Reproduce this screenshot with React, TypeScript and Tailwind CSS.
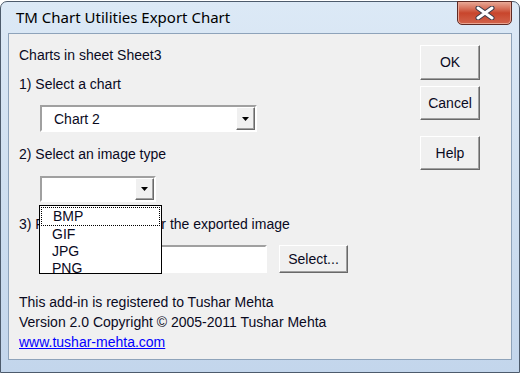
import React from "react";

const sunken =
  "border-2 border-t-[#a0a0a0] border-l-[#a0a0a0] border-b-white border-r-white bg-white";
const raised =
  "border border-t-white border-l-white border-b-[#696969] border-r-[#696969] shadow-[inset_-1px_-1px_0_#a0a0a0] bg-[#f0f0f0]";

function DropButton() {
  return (
    <div className={`flex items-center justify-center w-[19px] h-full ${raised}`}>
      <svg width="7" height="4" viewBox="0 0 7 4">
        <path d="M0 0H7L3.5 4Z" fill="#000" />
      </svg>
    </div>
  );
}

function Button({ label, className }: { label: string; className: string }) {
  return (
    <button className={`flex items-center justify-center text-[14px] text-[#0a0a1e] ${raised} ${className}`}>
      {label}
    </button>
  );
}

export default function App() {
  return (
    <div
      className="w-[520px] h-[375px] bg-white pt-px"
      style={{ fontFamily: '"Liberation Sans", Arial, sans-serif' }}
    >
      <div className="relative w-[520px] h-[372px] rounded-t-[7px] border border-[#4d5b6c] bg-gradient-to-b from-[#dce9f6] via-[#cfdff0] to-[#c3d6ec] flex flex-col px-[7px]">
        {/* title bar */}
        <div className="h-[31px] flex items-center pl-2">
          <span
            className="text-[15px] text-black"
            style={{ fontFamily: '"Noto Sans", "Open Sans", sans-serif' }}
          >
            TM Chart Utilities Export Chart
          </span>
        </div>
        <div className="absolute right-[7px] -top-px w-[55px] h-[24px] rounded-b-[5px] border border-[#5e2a24] bg-gradient-to-b from-[#e6a896] via-[#c8452c] to-[#d2634b] flex items-center justify-center shadow-[inset_0_0_0_1px_#e9a592]">
          <svg width="22" height="14" viewBox="0 0 22 14">
            <path d="M4 2L18 12M18 2L4 12" stroke="#3b3b4a" strokeWidth="5" strokeLinecap="round" />
            <path d="M4 2L18 12M18 2L4 12" stroke="#fff" strokeWidth="3" strokeLinecap="round" />
          </svg>
        </div>

        {/* client area */}
        <div className="h-[327px] border border-[#8ea3ba] bg-[#f0f0f0] flex text-[14px] text-[#0a0a1e]">
          <div className="flex-1 flex flex-col pl-[10px] pt-[11px] leading-[20px]">
            <div>Charts in sheet Sheet3</div>
            <div className="mt-[9px]">1) Select a chart</div>
            <div className={`mt-[11px] ml-[21px] w-[217px] h-[27px] flex ${sunken}`}>
              <div className="flex-1 flex items-center pl-[12px]">Chart 2</div>
              <DropButton />
            </div>
            <div className="mt-[12px]">2) Select an image type</div>
            <div className="relative mt-[12px] ml-[21px] w-[116px] h-[26px]">
              <div className={`w-full h-full flex ${sunken}`}>
                <div className="flex-1" />
                <DropButton />
              </div>
              <div className="absolute z-10 left-[-1px] top-[29px] w-[123px] h-[69px] border border-black bg-white flex flex-col pt-px leading-[17px]">
                <div className="mx-px pl-[11px] border border-dotted border-black">BMP</div>
                <div className="pl-[12px]">GIF</div>
                <div className="pl-[12px]">JPG</div>
                <div className="pl-[12px]">PNG</div>
              </div>
            </div>
            <div className="mt-[12px]">
              3) <span className="tracking-[-0.45px]">Full name and path fo</span>r the exported image
            </div>
            <div className="mt-[11px] flex items-center">
              <div className={`ml-[21px] w-[227px] h-[28px] ${sunken}`} />
              <Button label="Select..." className="ml-[12px] w-[69px] h-[28px]" />
            </div>
            <div className="mt-[19px]">This add-in is registered to Tushar Mehta</div>
            <div>Version 2.0 Copyright © 2005-2011 Tushar Mehta</div>
            <div>
              <a href="#" className="text-[#0000ff] underline">
                www.tushar-mehta.com
              </a>
            </div>
          </div>
          <div className="flex flex-col w-[60px] mr-[31px] pt-[11px]">
            <Button label="OK" className="h-[35px]" />
            <Button label="Cancel" className="mt-[6px] h-[34px]" />
            <Button label="Help" className="mt-[16px] h-[34px]" />
          </div>
        </div>
      </div>
    </div>
  );
}
